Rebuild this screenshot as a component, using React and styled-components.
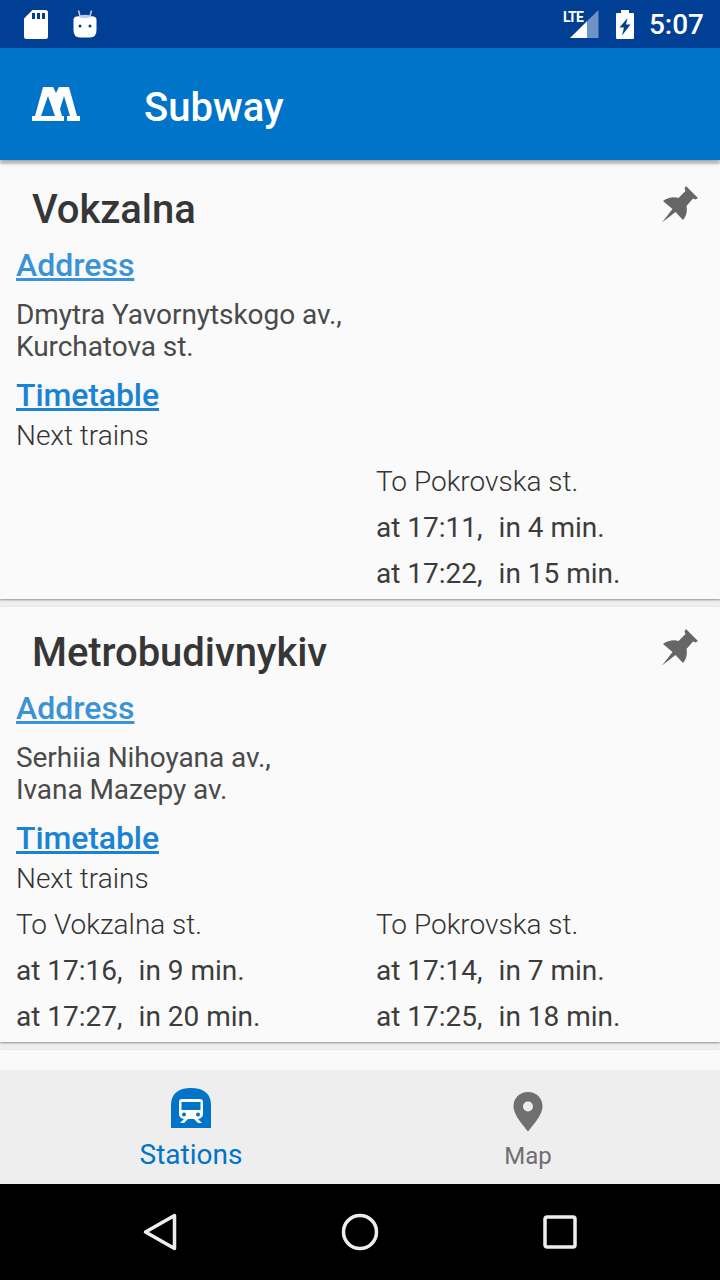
import styled, { createGlobalStyle } from "styled-components";

const GlobalStyle = createGlobalStyle`
  html, body { margin: 0; padding: 0; background: #000; }
  * { box-sizing: border-box; }
`;

const stations = [
  {
    name: "Vokzalna",
    address: ["Dmytra Yavornytskogo av.,", "Kurchatova st."],
    left: null,
    right: {
      to: "To Pokrovska st.",
      times: [["at 17:11,", "in 4 min."], ["at 17:22,", "in 15 min."]],
    },
  },
  {
    name: "Metrobudivnykiv",
    address: ["Serhiia Nihoyana av.,", "Ivana Mazepy av."],
    left: {
      to: "To Vokzalna st.",
      times: [["at 17:16,", "in 9 min."], ["at 17:27,", "in 20 min."]],
    },
    right: {
      to: "To Pokrovska st.",
      times: [["at 17:14,", "in 7 min."], ["at 17:25,", "in 18 min."]],
    },
  },
];

function PinIcon() {
  return (
    <Pin viewBox="0 0 40 40">
      <path fill="#666" d="M26 2 L38 14 L35.500 15.500 L33 14.500 L26.500 22 C27.500 27 26.500 32 23 36 L15.500 28 L2 38.500 L12.500 25 L3 17 C8 13.500 13.500 12.500 18.500 14 L25.500 7 L24.500 4.500 Z" />
    </Pin>
  );
}

function Direction({ data }) {
  if (!data) return <Column />;
  return (
    <Column>
      <DirectionName>{data.to}</DirectionName>
      {data.times.map(([at, wait]) => (
        <TrainTime key={at}>
          {at}
          <Wait>{wait}</Wait>
        </TrainTime>
      ))}
    </Column>
  );
}

function App() {
  return (
    <Screen>
      <GlobalStyle />
      <StatusBar>
        <LeftIcons>
          <svg width="24" height="29" viewBox="0 0 24 29">
            <path fill="#fff" d="M8.500 0 H21.500 a2.500 2.500 0 0 1 2.500 2.500 V26.500 a2.500 2.500 0 0 1 -2.500 2.500 H2.500 a2.500 2.500 0 0 1 -2.500 -2.500 V8.500 Z" />
            <path fill="#003f94" d="M8 3 h3 v6 h-3z M13 3 h3 v6 h-3z M18 3 h3 v6 h-3z" />
          </svg>
          <svg width="24" height="28" viewBox="0 0 24 28">
            <path stroke="#c3cde3" strokeWidth="1.500" d="M5.500 0.500 L7 6 M18.500 0.500 L17 6" />
            <path fill="#c3cde3" d="M3 7 Q12 2.500 21 7 L22 9 H2 Z" />
            <path fill="#fff" d="M0.500 10 Q0.500 6.500 4 6.500 Q12 10 20 6.500 Q23.500 6.500 23.500 10 V20 Q23.500 27.500 17 27.500 H7 Q0.500 27.500 0.500 20 Z" />
            <circle cx="7" cy="16" r="1.500" fill="#003f94" />
            <circle cx="17" cy="16" r="1.500" fill="#003f94" />
          </svg>
        </LeftIcons>
        <RightIcons>
          <Signal viewBox="0 0 38 32" width="38" height="32">
            <path fill="#6f93c6" d="M33.500 2 V30 H22 V13.300 Z" />
            <path fill="#fff" d="M22 13.300 V30 H5 Z" />
          </Signal>
          <LteLabel>LTE</LteLabel>
          <svg width="18" height="29" viewBox="0 0 18 29">
            <path fill="#fff" d="M5 0 H13 V3 H17 a1 1 0 0 1 1 1 V28 a1 1 0 0 1 -1 1 H1 a1 1 0 0 1 -1 -1 V4 a1 1 0 0 1 1 -1 H5 Z" />
            <path fill="#003f94" d="M11.500 8 L3.500 17.500 H8 L6 25.500 L14.500 14.500 H10 Z" />
          </svg>
          <Clock>5:07</Clock>
        </RightIcons>
      </StatusBar>

      <AppBar>
        <Logo viewBox="0 0 48 34">
          <path fill="#fff" fillRule="evenodd" d="M0 34 V29 H3 L11 0 H21 L24 6 L27 0 H37 L45 29 H48 V34 H35 V29 H38 L32 9 L28 22 L30 29 H32 V34 Z M9 29 H23 L16 9 Z" />
        </Logo>
        <AppTitle>Subway</AppTitle>
      </AppBar>

      <List>
        {stations.map((s) => (
          <Card key={s.name}>
            <TitleRow>
              <StationName>{s.name}</StationName>
              <PinIcon />
            </TitleRow>
            <AddressLink>Address</AddressLink>
            <AddressText>
              {s.address.map((line) => (
                <div key={line}>{line}</div>
              ))}
            </AddressText>
            <TimetableLink>Timetable</TimetableLink>
            <NextTrains>Next trains</NextTrains>
            <Directions>
              <Direction data={s.left} />
              <Direction data={s.right} />
            </Directions>
          </Card>
        ))}
        <Card />
      </List>

      <TabBar>
        <Tab>
          <svg width="40" height="40" viewBox="0 0 40 40">
            <path fill="#0074c8" d="M0 40 V17 C0 6 7 0 20 0 C33 0 40 6 40 17 V40 Z" />
            <path fill="#fff" fillRule="evenodd" d="M11 11 H29 a3 3 0 0 1 3 3 V26 a5 5 0 0 1 -5 5 L31 35 H27 L23 31 H17 L13 35 H9 L13 31 a5 5 0 0 1 -5 -5 V14 a3 3 0 0 1 3 -3 Z M10.500 14 V22 H29.500 V14 Z" />
            <circle cx="13" cy="26.500" r="2" fill="#0074c8" />
            <circle cx="27" cy="26.500" r="2" fill="#0074c8" />
          </svg>
          <TabLabel $active>Stations</TabLabel>
        </Tab>
        <Tab>
          <MapPin width="32" height="40" viewBox="0 0 32 40">
            <path fill="#6f6f6f" fillRule="evenodd" d="M16 0 C25 0 30.500 6.500 30.500 14.500 C30.500 23 21 33 16 39.500 C11 33 1.500 23 1.500 14.500 C1.500 6.500 7 0 16 0 Z M16 9.500 A5 5 0 1 0 16 19.500 A5 5 0 1 0 16 9.500 Z" />
          </MapPin>
          <TabLabel>Map</TabLabel>
        </Tab>
      </TabBar>

      <NavBar>
        <svg width="34" height="38" viewBox="0 0 34 38">
          <path fill="none" stroke="#eee" strokeWidth="3.500" strokeLinejoin="round" d="M31.500 2.500 V35.500 L2.500 19 Z" />
        </svg>
        <svg width="38" height="38" viewBox="0 0 38 38">
          <circle cx="19" cy="19" r="16.500" fill="none" stroke="#eee" strokeWidth="3.500" />
        </svg>
        <svg width="34" height="34" viewBox="0 0 34 34">
          <rect x="2" y="2" width="30" height="30" rx="2" fill="none" stroke="#eee" strokeWidth="3.500" />
        </svg>
      </NavBar>
    </Screen>
  );
}

const Screen = styled.div`
  width: 720px;
  height: 1280px;
  display: flex;
  flex-direction: column;
  overflow: hidden;
  background: #eeeeee;
  font-family: Roboto, "Liberation Sans", sans-serif;
`;
const StatusBar = styled.div`
  height: 48px;
  flex: none;
  display: flex;
  align-items: center;
  justify-content: space-between;
  padding: 0 16px 0 24px;
  background: #003f94;
`;
const LeftIcons = styled.div`
  display: flex;
  align-items: center;
  gap: 25px;
`;
const RightIcons = styled.div`
  display: flex;
  align-items: center;
  gap: 22px;
  position: relative;
`;
const Signal = styled.svg`
  margin-right: -9px;
`;
const LteLabel = styled.span`
  position: absolute;
  left: -2px;
  top: 1px;
  font-size: 14px;
  font-weight: 700;
  color: #fff;
  letter-spacing: -0.8px;
`;
const Clock = styled.span`
  font-size: 28px;
  font-weight: 500;
  color: #fff;
  margin-left: -7px;
`;
const AppBar = styled.header`
  height: 112px;
  flex: none;
  display: flex;
  align-items: center;
  padding: 0 32px;
  background: #0074c8;
  box-shadow: 0 3px 4px rgba(0, 0, 0, 0.3);
  position: relative;
  z-index: 1;
`;
const Logo = styled.svg`
  width: 48px;
  height: 34px;
  margin-right: 64px;
`;
const AppTitle = styled.h1`
  margin: 6px 0 0;
  font-size: 40px;
  font-weight: 500;
  color: #fff;
`;
const List = styled.main`
  flex: 1;
  min-height: 0;
  overflow: hidden;
  display: flex;
  flex-direction: column;
  gap: 8px;
  padding-top: 4px;
  background: #eeeeee;
`;
const Card = styled.section`
  flex: none;
  height: 435px;
  padding: 0 16px;
  background: #fafafa;
  box-shadow: 0 1px 2px rgba(0, 0, 0, 0.4);
`;
const TitleRow = styled.div`
  display: flex;
  align-items: flex-start;
  justify-content: space-between;
  height: 82px;
  padding: 18px 4px 0 16px;
`;
const StationName = styled.h2`
  margin: 0;
  font-size: 40px;
  line-height: 56px;
  font-weight: 500;
  letter-spacing: -0.07px;
  color: #363636;
`;
const Pin = styled.svg`
  width: 40px;
  height: 40px;
  margin-top: 2px;
`;
const SectionLink = styled.a`
  display: block;
  width: fit-content;
  font-size: 32px;
  line-height: 38px;
  font-weight: 500;
  text-decoration: underline;
`;
const AddressLink = styled(SectionLink)`
  color: #3a93d6;
`;
const TimetableLink = styled(SectionLink)`
  color: #1b83d3;
  margin-top: 13px;
  letter-spacing: -0.1px;
`;
const AddressText = styled.div`
  margin-top: 15px;
  font-size: 28px;
  line-height: 32px;
  letter-spacing: -0.06px;
  color: #4a4a4a;
`;
const NextTrains = styled.div`
  font-size: 28px;
  line-height: 40px;
  font-weight: 300;
  color: #333;
  margin-top: 2px;
`;
const Directions = styled.div`
  display: grid;
  grid-template-columns: 360px 1fr;
  margin-top: 3px;
`;
const Column = styled.div`
  display: flex;
  flex-direction: column;
`;
const DirectionName = styled.div`
  font-size: 28px;
  line-height: 46px;
  font-weight: 300;
  color: #333;
`;
const TrainTime = styled.div`
  font-size: 28px;
  line-height: 46px;
  color: #3c3c3c;
`;
const Wait = styled.span`
  margin-left: 16px;
`;
const TabBar = styled.nav`
  height: 114px;
  flex: none;
  display: grid;
  grid-template-columns: 382px 292px;
  background: #eeeeee;
  position: relative;
`;
const Tab = styled.div`
  display: flex;
  flex-direction: column;
  align-items: center;
  padding-top: 18px;
`;
const MapPin = styled.svg`
  margin-top: 4px;
`;
const TabLabel = styled.span`
  font-size: ${(p) => (p.$active ? "28px" : "24px")};
  line-height: 34px;
  margin-top: ${(p) => (p.$active ? "10px" : "7px")};
  color: ${(p) => (p.$active ? "#0074c8" : "#6f6f6f")};
`;
const NavBar = styled.div`
  height: 96px;
  flex: none;
  display: flex;
  align-items: center;
  justify-content: space-between;
  padding: 0 143px;
  background: #000;
`;

export default App;
